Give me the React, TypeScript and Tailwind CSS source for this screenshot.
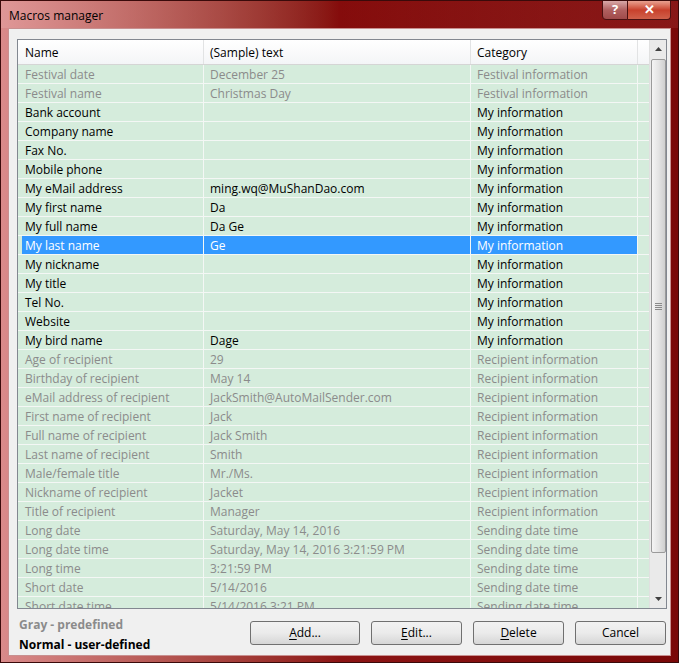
import React from 'react'

type Row = { name: string; text: string; category: string; predefined: boolean }

const rows: Row[] = [
  { name: 'Festival date', text: 'December 25', category: 'Festival information', predefined: true },
  { name: 'Festival name', text: 'Christmas Day', category: 'Festival information', predefined: true },
  { name: 'Bank account', text: '', category: 'My information', predefined: false },
  { name: 'Company name', text: '', category: 'My information', predefined: false },
  { name: 'Fax No.', text: '', category: 'My information', predefined: false },
  { name: 'Mobile phone', text: '', category: 'My information', predefined: false },
  { name: 'My eMail address', text: 'ming.wq@MuShanDao.com', category: 'My information', predefined: false },
  { name: 'My first name', text: 'Da', category: 'My information', predefined: false },
  { name: 'My full name', text: 'Da Ge', category: 'My information', predefined: false },
  { name: 'My last name', text: 'Ge', category: 'My information', predefined: false },
  { name: 'My nickname', text: '', category: 'My information', predefined: false },
  { name: 'My title', text: '', category: 'My information', predefined: false },
  { name: 'Tel No.', text: '', category: 'My information', predefined: false },
  { name: 'Website', text: '', category: 'My information', predefined: false },
  { name: 'My bird name', text: 'Dage', category: 'My information', predefined: false },
  { name: 'Age of recipient', text: '29', category: 'Recipient information', predefined: true },
  { name: 'Birthday of recipient', text: 'May 14', category: 'Recipient information', predefined: true },
  { name: 'eMail address of recipient', text: 'JackSmith@AutoMailSender.com', category: 'Recipient information', predefined: true },
  { name: 'First name of recipient', text: 'Jack', category: 'Recipient information', predefined: true },
  { name: 'Full name of recipient', text: 'Jack Smith', category: 'Recipient information', predefined: true },
  { name: 'Last name of recipient', text: 'Smith', category: 'Recipient information', predefined: true },
  { name: 'Male/female title', text: 'Mr./Ms.', category: 'Recipient information', predefined: true },
  { name: 'Nickname of recipient', text: 'Jacket', category: 'Recipient information', predefined: true },
  { name: 'Title of recipient', text: 'Manager', category: 'Recipient information', predefined: true },
  { name: 'Long date', text: 'Saturday, May 14, 2016', category: 'Sending date time', predefined: true },
  { name: 'Long date time', text: 'Saturday, May 14, 2016 3:21:59 PM', category: 'Sending date time', predefined: true },
  { name: 'Long time', text: '3:21:59 PM', category: 'Sending date time', predefined: true },
  { name: 'Short date', text: '5/14/2016', category: 'Sending date time', predefined: true },
  { name: 'Short date time', text: '5/14/2016 3:21 PM', category: 'Sending date time', predefined: true },
]

const SELECTED = 9

function DialogButton({ hot, rest, width }: { hot: string; rest: string; width: string }) {
  return (
    <button
      className={`${width} h-[24px] rounded-[3px] border border-[#707070] bg-gradient-to-b from-[#f2f2f2] via-[#ebebeb] to-[#d6d6d6] text-[12px] text-black flex items-center justify-center`}
    >
      <span className="underline underline-offset-2">{hot}</span>
      {rest}
    </button>
  )
}

function Scrollbar() {
  return (
    <div className="w-[17px] h-full bg-[#eaeaea] border-l border-[#e0e0e0] flex flex-col items-center">
      <div className="h-[18px] w-full flex items-center justify-center">
        <svg width="7" height="4" viewBox="0 0 7 4">
          <path d="M3.5 0 L7 4 L0 4 Z" fill="#404040" />
        </svg>
      </div>
      <div className="mt-[1px] w-[15px] h-[494px] rounded-[2px] border border-[#9a9a9a] bg-gradient-to-r from-[#f4f4f4] via-[#e4e4e4] to-[#cfcfcf] flex items-center justify-center">
        <div className="flex flex-col gap-[1px]">
          <div className="w-[7px] h-[1px] bg-[#8a8a8a]" />
          <div className="w-[7px] h-[1px] bg-[#8a8a8a]" />
          <div className="w-[7px] h-[1px] bg-[#8a8a8a]" />
          <div className="w-[7px] h-[1px] bg-[#8a8a8a]" />
        </div>
      </div>
      <div className="flex-1" />
      <div className="h-[18px] w-full flex items-center justify-center">
        <svg width="7" height="4" viewBox="0 0 7 4">
          <path d="M0 0 L7 0 L3.5 4 Z" fill="#404040" />
        </svg>
      </div>
    </div>
  )
}

export default function App() {
  return (
    <div
      className="w-[679px] h-[663px] overflow-hidden flex flex-col border border-[#3a0a0a] bg-gradient-to-r from-[#d98a8a] via-[#8c1414] to-[#7a0808]"
      style={{ fontFamily: '"Open Sans", "Noto Sans", Arial, sans-serif' }}
    >
      {/* Title bar */}
      <div className="h-[27px] flex items-start shrink-0 bg-gradient-to-r from-[#e3a0a0]/60 via-[#7a0000]/40 to-[#a83a3a]/30">
        <div className="flex-1 pl-[8px] pt-[6px] text-[12px] text-black leading-[18px]">Macros manager</div>
        <div className="flex mr-[7px] -mt-[1px]">
          <div className="w-[26px] h-[20px] rounded-bl-[4px] border border-[#4a1010] bg-gradient-to-b from-[#d8a8a8] via-[#b06060] to-[#a04a4a] flex items-center justify-center text-white text-[13px] font-bold">
            ?
          </div>
          <div className="w-[43px] h-[20px] rounded-br-[4px] border border-l-0 border-[#4a1010] bg-gradient-to-b from-[#e8a090] via-[#c8402c] to-[#d0604a] flex items-center justify-center text-white text-[13px] font-bold">
            ✕
          </div>
        </div>
      </div>

      {/* Client area */}
      <div className="flex-1 mx-[7px] mb-[7px] bg-[#f0f0f0] border border-[#c89090] pl-[8px] pt-[10px] pr-[4px] flex flex-col">
        <div className="w-[650px] h-[570px] border border-[#828790] bg-white flex overflow-hidden">
          <div className="w-[631px] flex flex-col overflow-hidden">
            {/* Header */}
            <div className="h-[25px] shrink-0 flex text-[12px] leading-[20px] text-black bg-gradient-to-b from-white to-[#f4f5f7] border-b border-[#d5d5d5]">
              <div className="w-[186px] pl-[7px] pt-[3px] border-r border-[#e2e3e4]">Name</div>
              <div className="w-[267px] pl-[6px] pt-[3px] border-r border-[#e2e3e4]">(Sample) text</div>
              <div className="w-[167px] pl-[6px] pt-[3px] border-r border-[#e2e3e4]">Category</div>
              <div className="flex-1" />
            </div>
            {/* Rows */}
            {rows.map((r, i) => {
              const sel = i === SELECTED
              const color = sel ? 'text-white' : r.predefined ? 'text-[#8b8b8b]' : 'text-black'
              return (
                <div key={r.name} className={`h-[19px] shrink-0 flex text-[12px] leading-[20px] bg-[#d5ecdc] border-b border-[#f4f7f5] ${color}`}>
                  <div className="w-[186px] pl-[4px] border-r border-[#f4f7f5] flex">
                    <div className={`flex-1 pl-[3px] whitespace-nowrap ${sel ? 'bg-[#3399ff]' : ''}`}>{r.name}</div>
                  </div>
                  <div className={`w-[267px] pl-[6px] border-r border-[#f4f7f5] whitespace-nowrap ${sel ? 'bg-[#3399ff]' : ''}`}>{r.text}</div>
                  <div className={`w-[167px] pl-[6px] border-r border-[#f4f7f5] whitespace-nowrap ${sel ? 'bg-[#3399ff]' : ''}`}>{r.category}</div>
                  <div className="flex-1" />
                </div>
              )
            })}
          </div>
          <Scrollbar />
        </div>

        {/* Bottom */}
        <div className="flex items-start mt-[10px]">
          <div className="flex flex-col text-[12px] font-bold leading-[20px] -mt-[4px] pl-[2px]">
            <span className="text-[#8b8b8b]">Gray - predefined</span>
            <span className="text-black">Normal - user-defined</span>
          </div>
          <div className="flex-1" />
          <div className="flex gap-[11px] pt-[2px]">
            <DialogButton hot="A" rest="dd..." width="w-[110px]" />
            <DialogButton hot="E" rest="dit..." width="w-[91px]" />
            <DialogButton hot="D" rest="elete" width="w-[91px]" />
            <DialogButton hot="" rest="Cancel" width="w-[91px]" />
          </div>
        </div>
      </div>
    </div>
  )
}
